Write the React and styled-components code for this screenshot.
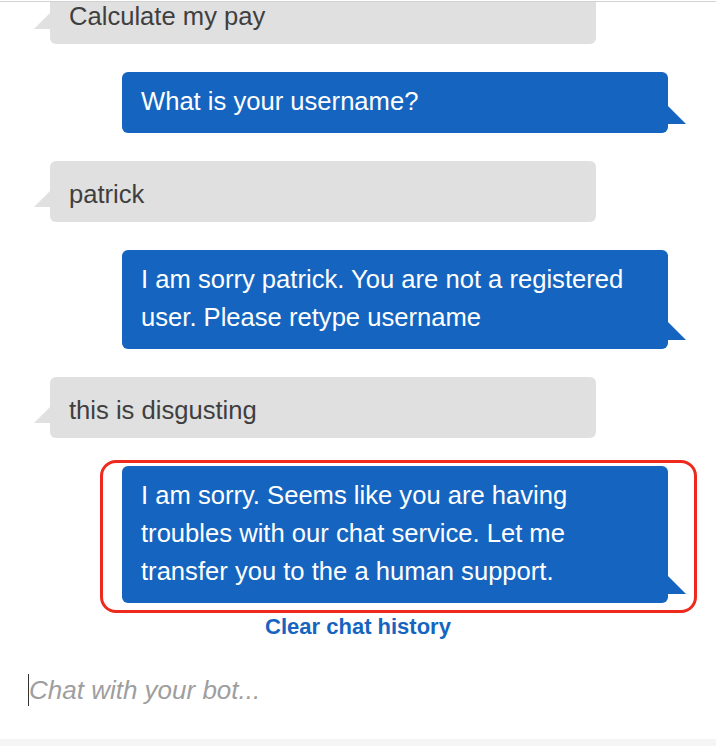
import React from "react";
import styled, { createGlobalStyle, css } from "styled-components";

const GlobalStyle = createGlobalStyle`
  html, body {
    margin: 0;
    padding: 0;
    background: #fff;
  }
  body {
    font-family: "Liberation Sans", Arial, Helvetica, sans-serif;
  }
`;

const messages = [
  { id: 1, side: "human", text: "Calculate my pay" },
  { id: 2, side: "bot", text: "What is your username?" },
  { id: 3, side: "human", text: "patrick" },
  {
    id: 4,
    side: "bot",
    text: "I am sorry patrick. You are not a registered user. Please retype username",
  },
  { id: 5, side: "human", text: "this is disgusting" },
  {
    id: 6,
    side: "bot",
    text: "I am sorry. Seems like you are having troubles with our chat service. Let me transfer you to the a human support.",
    highlight: true,
  },
];

const Message = ({ side, text, highlight }) => (
  <Bubble $side={side} $highlight={highlight}>
    {text}
  </Bubble>
);

const App = () => (
  <>
    <GlobalStyle />
    <Page>
      <MessageList>
        {messages.map((m) => (
          <Message key={m.id} {...m} />
        ))}
      </MessageList>
      <ClearLink href="#">Clear chat history</ClearLink>
      <InputRow>
        <Caret />
        <Placeholder>Chat with your bot...</Placeholder>
      </InputRow>
      <Footer />
    </Page>
  </>
);

const Page = styled.div`
  margin-top: 1px;
  height: 745px;
  border-top: 1px solid #d2d2d2;
  box-sizing: border-box;
  display: flex;
  flex-direction: column;
`;

const MessageList = styled.div`
  flex: 1;
  min-height: 0;
  overflow: hidden;
  display: flex;
  flex-direction: column;
  justify-content: flex-end;
  gap: 28px;
  padding: 0 48px 10px 50px;
`;

const Bubble = styled.div`
  position: relative;
  flex-shrink: 0;
  width: 546px;
  box-sizing: border-box;
  padding: ${(p) => (p.$side === "bot" ? "10px 20px 13px 19px" : "14px 20px 9px 19px")};
  border-radius: 6px;
  font-size: 25.6px;
  line-height: 38px;
  background: ${(p) => (p.$side === "bot" ? "#1565c0" : "#e0e0e0")};
  color: ${(p) => (p.$side === "bot" ? "#fff" : "#3f3f3f")};
  align-self: ${(p) => (p.$side === "bot" ? "flex-end" : "flex-start")};

  &::before {
    content: "";
    position: absolute;
    width: 0;
    height: 0;
    ${(p) =>
      p.$side === "bot"
        ? css`
            right: -18px;
            bottom: 9px;
            border-bottom: 18px solid #1565c0;
            border-right: 18px solid transparent;
          `
        : css`
            left: -16px;
            bottom: 15px;
            border-bottom: 16px solid #e0e0e0;
            border-left: 16px solid transparent;
          `}
  }

  ${(p) =>
    p.$highlight &&
    css`
      &::after {
        content: "";
        position: absolute;
        top: -6px;
        left: -22px;
        right: -29px;
        bottom: -10px;
        border: 3px solid #ee2a1f;
        border-radius: 16px;
        pointer-events: none;
      }
    `}
`;

const ClearLink = styled.a`
  align-self: center;
  margin-top: 1px;
  font-size: 22px;
  line-height: 26px;
  font-weight: bold;
  color: #1565c0;
  text-decoration: none;
`;

const InputRow = styled.div`
  display: flex;
  align-items: center;
  padding: 34px 28px 33px;
  height: 32px;
`;

const Caret = styled.span`
  width: 1px;
  height: 32px;
  background: #333;
`;

const Placeholder = styled.span`
  font-size: 26px;
  font-style: italic;
  color: #9e9e9e;
  line-height: 32px;
`;

const Footer = styled.div`
  height: 7px;
  background: #f5f5f5;
`;

export default App;
